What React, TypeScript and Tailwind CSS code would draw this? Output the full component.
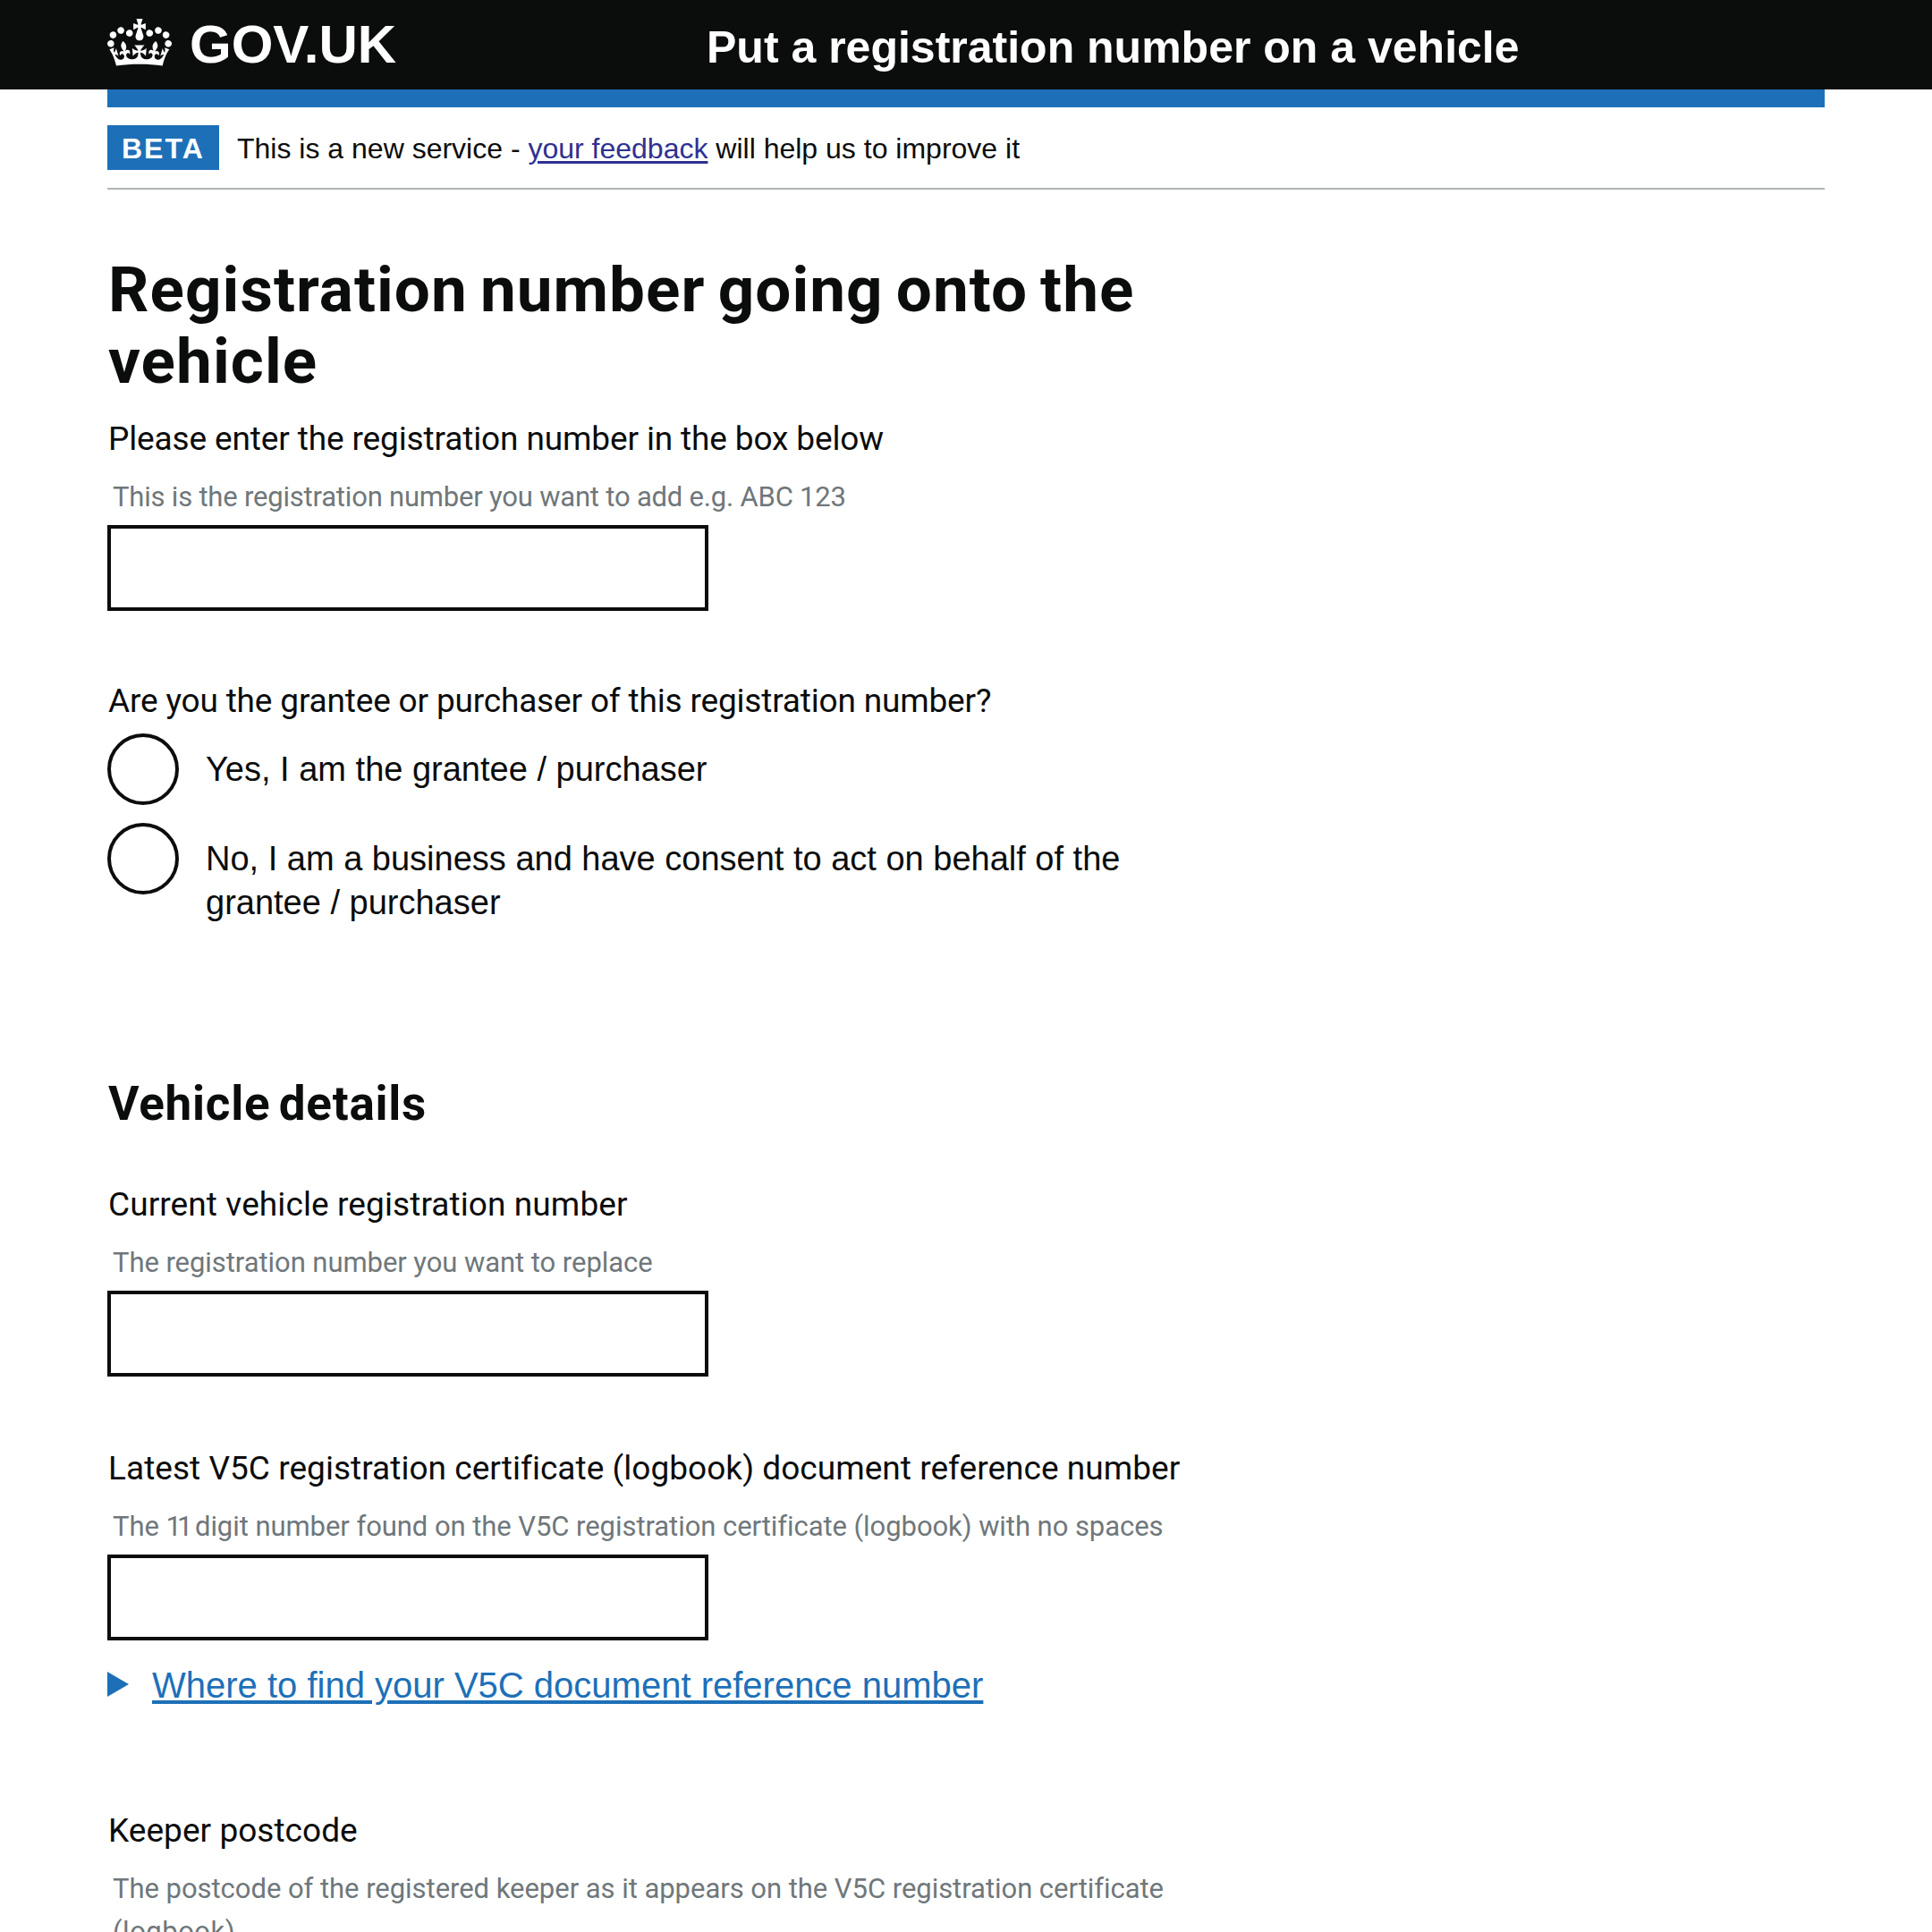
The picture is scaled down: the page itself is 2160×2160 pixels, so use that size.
import React from "react";

const CROWN =
  "M25 30.2c3.5 1.5 7.7-.2 9.1-3.7 1.5-3.6-.2-7.8-3.9-9.2-3.6-1.4-7.6.3-9.1 3.9-1.4 3.5.3 7.5 3.9 9zM9 39.5c3.6 1.5 7.8-.2 9.2-3.7 1.5-3.6-.2-7.8-3.9-9.1-3.6-1.5-7.6.2-9.1 3.8-1.4 3.5.3 7.5 3.8 9zM4.4 57.2c3.5 1.5 7.7-.2 9.1-3.8 1.5-3.6-.2-7.7-3.9-9.1-3.5-1.5-7.6.3-9.1 3.8-1.4 3.5.3 7.6 3.9 9.1zm38.3-21.4c3.5 1.5 7.7-.2 9.1-3.8 1.5-3.6-.2-7.7-3.9-9.1-3.6-1.5-7.6.3-9.1 3.8-1.3 3.6.4 7.7 3.9 9.1zm64.4-5.6c-3.6 1.5-7.8-.2-9.1-3.7-1.5-3.6.2-7.8 3.8-9.2 3.6-1.4 7.7.3 9.2 3.9 1.3 3.5-.4 7.5-3.9 9zm15.9 9.3c-3.6 1.5-7.7-.2-9.1-3.7-1.5-3.6.2-7.8 3.7-9.1 3.6-1.5 7.7.2 9.2 3.8 1.5 3.5-.3 7.5-3.8 9zm4.7 17.7c-3.6 1.5-7.8-.2-9.2-3.8-1.5-3.6.2-7.7 3.9-9.1 3.6-1.5 7.7.3 9.2 3.8 1.3 3.5-.4 7.6-3.9 9.1zM89.3 35.8c-3.6 1.5-7.8-.2-9.2-3.8-1.4-3.6.2-7.7 3.9-9.1 3.6-1.5 7.7.3 9.2 3.8 1.4 3.6-.3 7.7-3.9 9.1zM69.7 17.7l8.9 4.7V9.3l-8.9 2.8c-.2-.3-.5-.6-.9-.9L72.4 0H59.6l3.5 11.2c-.3.3-.6.5-.9.9l-8.8-2.8v13.1l8.8-4.7c.3.3.6.7.9.9l-5 15.4v.1c-.2.8-.4 1.6-.4 2.4 0 4.1 3.1 7.5 7 8.1h.2c.3 0 .7.1 1 .1.4 0 .7 0 1-.1h.2c4-.6 7.1-4.1 7.1-8.1 0-.8-.1-1.7-.4-2.4V34l-5.1-15.4c.4-.2.7-.6 1-.9zM66 92.8c16.9 0 32.8 1.1 47.1 3.2 4-16.9 8.9-26.7 14-33.5l-9.6-3.4c1 4.9 1.1 7.2 0 10.2-1.5-1.4-3-4.3-4.2-8.7L108.6 76c2.8-2 5-3.2 7.5-3.3-4.4 9.4-10 11.9-13.6 11.2-4.3-.8-6.3-4.6-5.6-7.9 1-4.7 5.7-5.9 8-.5 4.3-8.7-3-11.4-7.6-8.8 7.1-7.2 7.9-13.5 2.1-21.1-8 6.1-8.1 12.3-4.5 20.8-4.7-5.4-12.1-2.5-9.5 6.2 3.4-5.2 7.9-2 7.2 3.1-.6 4.3-6.4 7.8-13.5 7.2-10.3-.9-10.9-8-11.2-13.8 2.5-.5 7.1 1.8 11 7.3L80.2 60c-4.1 4.4-8 5.3-12.3 5.4 1.4-4.4 8-11.6 8-11.6H55.5s6.4 7.2 7.9 11.6c-4.2-.1-8-1-12.3-5.4l1.4 16.4c3.9-5.5 8.5-7.7 10.9-7.3-.3 5.8-.9 12.8-11.1 13.8-7.2.6-12.9-2.9-13.5-7.2-.7-5 3.8-8.3 7.1-3.1 2.7-8.7-4.6-11.6-9.4-6.2 3.7-8.5 3.6-14.7-4.6-20.8-5.8 7.6-5 13.9 2.2 21.1-4.7-2.6-11.9.1-7.7 8.8 2.3-5.5 7.1-4.2 8.1.5.7 3.3-1.3 7.1-5.7 7.9-3.5.7-9-1.8-13.5-11.2 2.5.1 4.7 1.3 7.5 3.3l-4.7-15.4c-1.2 4.4-2.7 7.2-4.3 8.7-1.1-3-.9-5.3 0-10.2l-9.5 3.4c5 6.9 9.9 16.7 14 33.5 14.8-2.1 30.8-3.2 47.7-3.2z";

interface FieldProps {
  label: string;
  labelClass: string;
  hint: React.ReactNode;
  hintClass: string;
  className: string;
}

function Field({ label, labelClass, hint, hintClass, className }: FieldProps) {
  return (
    <label className={`block ${className}`}>
      <span className={`block whitespace-nowrap pl-px font-['Roboto',sans-serif] text-[37px] leading-[50px] ${labelClass}`}>{label}</span>
      <span className={`mt-4 block whitespace-nowrap pl-1.5 font-['Roboto',sans-serif] text-[31px] leading-[48px] text-[#6f777b] ${hintClass}`}>
        {hint}
      </span>
      <input type="text" className="mt-[7px] block h-24 w-[672px] appearance-none rounded-none border-4 border-[#0b0c0c] bg-white outline-none" />
    </label>
  );
}

function Radio({ children, className }: { children: React.ReactNode; className: string }) {
  return (
    <label className={`flex items-start gap-[30px] ${className}`}>
      <input type="radio" name="grantee" className="size-20 shrink-0 appearance-none rounded-full border-4 border-[#0b0c0c] bg-white" />
      <span className="whitespace-nowrap pt-4 text-[38px] leading-[49.4px]">{children}</span>
    </label>
  );
}

export default function App() {
  return (
    <div className="h-[2160px] overflow-hidden bg-white font-['Liberation_Sans',Arial,sans-serif] text-[#0b0c0c]">
      <header className="flex h-[100px] items-start bg-[#0b0c0c] px-[120px] font-bold text-white">
        <div className="flex w-[670px] items-start">
          <svg viewBox="0 0 132 97" className="mt-[21px] h-[53px] w-[72px]" fill="currentColor" aria-hidden="true">
            <path fillRule="evenodd" d={CROWN} />
          </svg>
          <span className="ml-5 mt-5 text-[60px] leading-[60px]">GOV.UK</span>
        </div>
        <span className="mt-7 whitespace-nowrap text-[50px] leading-[50px]">Put a registration number on a vehicle</span>
      </header>

      <main className="mx-[120px]">
        <div className="h-5 bg-[#1d70b8]" />
        <div className="flex h-[92px] items-start gap-5 border-b-2 border-[#b1b4b6] pt-5">
          <strong className="h-[50px] w-[125px] bg-[#1d70b8] pl-4 pt-1.5 text-[32px] font-bold leading-[40px] tracking-[2px] text-white">BETA</strong>
          <span className="whitespace-nowrap pt-1.5 text-[32px] leading-[40px]">
            This is a new service -{" "}
            <a href="#" className="text-[#2e3191] underline decoration-[3px] underline-offset-[3px]">your feedback</a> will help us to improve it
          </span>
        </div>

        <h1 className="mt-[72px] whitespace-nowrap pl-px font-['Roboto',sans-serif] text-[71px] font-bold leading-[80px] tracking-[1.05px] [word-spacing:-4.6px]">
          Registration number going onto the
          <br />
          <span className="tracking-[1.1px]">vehicle</span>
        </h1>

        <Field
          className="mt-[22px]"
          label="Please enter the registration number in the box below"
          labelClass="tracking-[-0.13px]"
          hint="This is the registration number you want to add e.g. ABC 123"
          hintClass="tracking-[-0.2px]"
        />

        <fieldset className="mt-[76px]">
          <legend className="block whitespace-nowrap pl-px font-['Roboto',sans-serif] text-[37px] leading-[50px] tracking-[-0.17px]">
            Are you the grantee or purchaser of this registration number?
          </legend>
          <div className="mt-[11px] flex flex-col gap-5">
            <Radio className="h-20">Yes, I am the grantee / purchaser</Radio>
            <Radio className="h-[114px]">
              No, I am a business and have consent to act on behalf of the
              <br />
              grantee / purchaser
            </Radio>
          </div>
        </fieldset>

        <h2 className="mt-[170px] pl-px font-['Roboto',sans-serif] text-[53px] font-bold leading-[60px] tracking-[0.75px] [word-spacing:-4.5px]">
          Vehicle details
        </h2>

        <Field
          className="mt-[58px]"
          label="Current vehicle registration number"
          labelClass="tracking-[0.1px]"
          hint="The registration number you want to replace"
          hintClass="tracking-[-0.06px]"
        />
        <Field
          className="mt-[78px]"
          label="Latest V5C registration certificate (logbook) document reference number"
          labelClass="tracking-[0.04px]"
          hint={
            <>
              The <span className="tracking-[-5px]">11</span> digit number found on the V5C registration certificate (logbook) with no spaces
            </>
          }
          hintClass="tracking-[-0.06px]"
        />

        <div className="mt-[25px] flex h-[50px] items-start text-[#1d70b8]">
          <svg viewBox="0 0 24 28" className="mt-[10px] h-7 w-6" fill="currentColor" aria-hidden="true">
            <path d="M0 0L24 14L0 28Z" />
          </svg>
          <a href="#" className="ml-[26px] whitespace-nowrap text-[40px] leading-[50px] underline decoration-4 underline-offset-[3px]">
            Where to find your V5C document reference number
          </a>
        </div>

        <Field
          className="mt-[113px]"
          label="Keeper postcode"
          labelClass="tracking-[0.04px]"
          hint={
            <>
              The postcode of the registered keeper as it appears on the V5C registration certificate
              <br />
              <span className="tracking-[0.5px]">(logbook)</span>
            </>
          }
          hintClass="tracking-[-0.04px]"
        />
      </main>
    </div>
  );
}
